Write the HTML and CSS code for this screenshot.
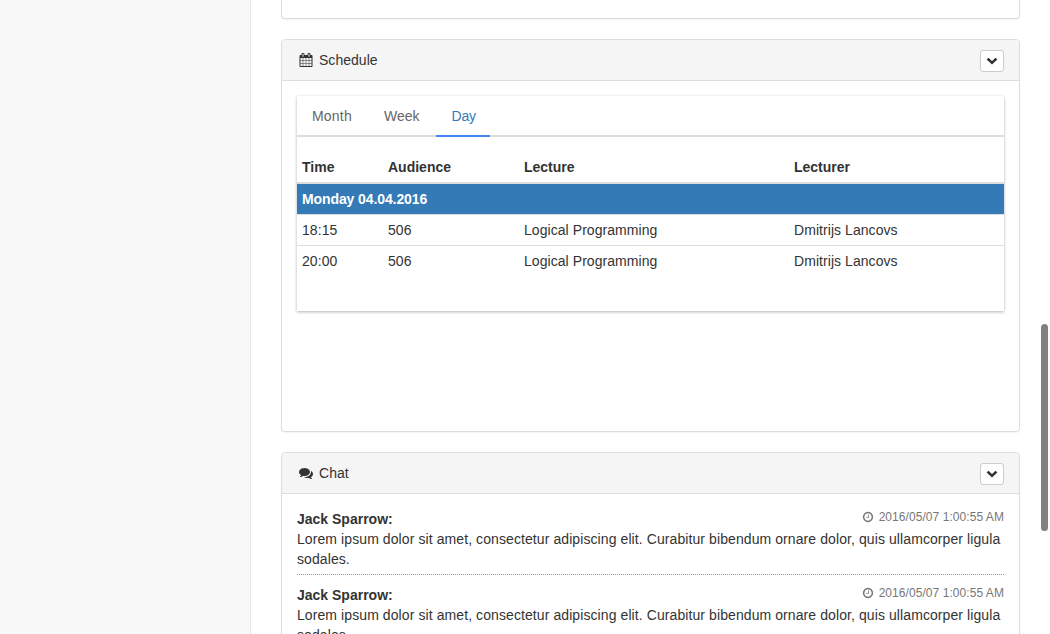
FILE: index.html
```html
<!DOCTYPE html>
<html lang="en">
<head>
<meta charset="utf-8">
<title>Dashboard</title>
<link rel="stylesheet" href="styles.css">
</head>
<body>
<svg width="0" height="0" class="sprite">
  <symbol id="calendar" viewBox="0 0 1792 1792"><path d="M192 1664h288v-288h-288v288zm352 0h320v-288h-320v288zm-352-352h288v-320h-288v320zm352 0h320v-320h-320v320zm-352-384h288v-288h-288v288zm736 736h320v-288h-320v288zm-384-736h320v-288h-320v288zm768 736h288v-288h-288v288zm-384-352h320v-320h-320v320zm-352-864v-288q0-13-9.500-22.500t-22.500-9.500h-64q-13 0-22.500 9.500t-9.500 22.500v288q0 13 9.500 22.500t22.500 9.500h64q13 0 22.500-9.500t9.500-22.500zm736 864h288v-320h-288v320zm-384-384h320v-288h-320v288zm384 0h288v-288h-288v288zm32-480v-288q0-13-9.500-22.500t-22.500-9.500h-64q-13 0-22.500 9.500t-9.500 22.500v288q0 13 9.500 22.500t22.500 9.500h64q13 0 22.500-9.500t9.500-22.500zm384-64v1280q0 52-38 90t-90 38h-1408q-52 0-90-38t-38-90v-1280q0-52 38-90t90-38h128v-96q0-66 47-113t113-47h64q66 0 113 47t47 113v96h384v-96q0-66 47-113t113-47h64q66 0 113 47t47 113v96h128q52 0 90 38t38 90z"/></symbol>
  <symbol id="comments" viewBox="0 0 1792 1792"><path d="M1408 768q0 139-94 257t-256.500 186.500-353.500 68.500q-86 0-176-16-124 88-278 128-36 9-86 16h-3q-11 0-20.500-8t-11.500-21q-1-3-1-6.500t.5-6.500 2-6l2.500-5 3.500-5.500 4-5 4.500-5 4-4.500q5-6 23-25t26-29.500 22.500-29 25-38.500 20.500-44q-124-72-195-177t-71-224q0-139 94-257t256.500-186.500 353.500-68.500 353.500 68.500 256.500 186.500 94 257zm384 256q0 120-71 224.500t-195 176.500q10 24 20.500 44t25 38.500 22.500 29 26 29.500 23 25q1 1 4 4.500t4.500 5 4 5 3.500 5.500l2.500 5 2 6 .5 6.500-1 6.500q-3 14-13 22t-22 7q-50-7-86-16-154-40-278-128-90 16-176 16-271 0-472-132 58 4 88 4 161 0 309-45t264-129q125-92 192-212t67-254q0-77-23-152 129 71 204 178t75 230z"/></symbol>
  <symbol id="clock" viewBox="0 0 1792 1792"><path d="M1024 544v448q0 14-9 23t-23 9h-320q-14 0-23-9t-9-23v-64q0-14 9-23t23-9h224v-352q0-14 9-23t23-9h64q14 0 23 9t9 23zm416 352q0-148-73-273t-198-198-273-73-273 73-198 198-73 273 73 273 198 198 273 73 273-73 198-198 73-273zm224 0q0 209-103 385.500t-279.500 279.500-385.500 103-385.500-103-279.500-279.500-103-385.500 103-385.500 279.500-279.500 385.500-103 385.500 103 279.500 279.500 103 385.500z"/></symbol>
  <symbol id="chevron" viewBox="0 0 12 8"><path d="M.6 2.500 2.500.7 6 4 9.500.7l1.900 1.800L6 7.500z"/></symbol>
</svg>
<div class="page">
  <aside class="sidebar"></aside>
  <main class="content">
    <section class="panel panel-previous"></section>

    <section class="panel panel-schedule">
      <header class="panel-heading">
        <svg class="heading-icon"><use href="#calendar"/></svg>
        <span class="panel-title">Schedule</span>
        <button class="toggle" aria-label="Options"><svg><use href="#chevron"/></svg></button>
      </header>
      <div class="panel-body">
        <div class="card">
          <nav class="tabs">
            <a class="tab">Month</a>
            <a class="tab">Week</a>
            <a class="tab active">Day</a>
          </nav>
          <table class="schedule">
            <colgroup><col class="col-time"><col class="col-audience"><col class="col-lecture"><col></colgroup>
            <thead><tr><th>Time</th><th>Audience</th><th>Lecture</th><th>Lecturer</th></tr></thead>
            <tbody>
              <tr class="date-row"><th colspan="4">Monday 04.04.2016</th></tr>
              <tr><td>18:15</td><td>506</td><td>Logical Programming</td><td>Dmitrijs Lancovs</td></tr>
              <tr><td>20:00</td><td>506</td><td>Logical Programming</td><td>Dmitrijs Lancovs</td></tr>
            </tbody>
          </table>
        </div>
      </div>
    </section>

    <section class="panel">
      <header class="panel-heading">
        <svg class="heading-icon"><use href="#comments"/></svg>
        <span class="panel-title">Chat</span>
        <button class="toggle" aria-label="Options"><svg><use href="#chevron"/></svg></button>
      </header>
      <div class="panel-body">
        <article class="message">
          <div class="message-head"><strong>Jack Sparrow:</strong><time><svg><use href="#clock"/></svg>2016/05/07 1:00:55 AM</time></div>
          <p>Lorem ipsum dolor sit amet, consectetur adipiscing elit. Curabitur bibendum ornare dolor, quis ullamcorper ligula sodales.</p>
        </article>
        <article class="message">
          <div class="message-head"><strong>Jack Sparrow:</strong><time><svg><use href="#clock"/></svg>2016/05/07 1:00:55 AM</time></div>
          <p>Lorem ipsum dolor sit amet, consectetur adipiscing elit. Curabitur bibendum ornare dolor, quis ullamcorper ligula sodales.</p>
        </article>
      </div>
    </section>
  </main>
  <div class="scroll-thumb"></div>
</div>
</body>
</html>
```
FILE: styles.css
```css
* { box-sizing: border-box; }
body {
  margin: 0;
  overflow: hidden;
  background: #fff;
  color: #333;
  font: 14px/20px "Helvetica Neue", "Liberation Sans", Arial, sans-serif;
}
.sprite { position: absolute; }
svg { fill: currentColor; flex: none; }
.page { position: relative; display: flex; height: 634px; overflow: hidden; }
.sidebar { flex: none; width: 251px; background: #f8f8f8; border-right: 1px solid #e7e7e7; }
.content { flex: 1; padding: 0 30px; }
.panel {
  margin-bottom: 20px;
  border: 1px solid #ddd;
  border-radius: 4px;
  background: #fff;
  box-shadow: 0 1px 1px rgba(0, 0, 0, .05);
}
.panel-previous { height: 19px; border-top: 0; border-radius: 0 0 4px 4px; }
.panel-schedule { height: 393px; }
.panel-heading {
  display: flex;
  align-items: flex-start;
  height: 41px;
  padding: 10px 15px;
  background: #f5f5f5;
  border-bottom: 1px solid #ddd;
  border-radius: 3px 3px 0 0;
}
.heading-icon { width: 14px; height: 14px; margin: 3px 6px 0 2px; }
.panel-title { flex: 1; letter-spacing: .03px; }
.toggle {
  display: flex;
  align-items: center;
  justify-content: center;
  width: 24px;
  height: 22px;
  padding: 0;
  background: #fff;
  border: 1px solid #ccc;
  border-radius: 3px;
  color: #333;
}
.toggle svg { width: 12px; height: 8px; }
.panel-body { padding: 15px; }
.card { height: 215px; background: #fff; box-shadow: 0 1px 3px rgba(0, 0, 0, .3); }
.tabs { display: flex; gap: 2px; height: 41px; margin-bottom: 15px; border-bottom: 2px solid #ddd; }
.tab { height: 41px; padding: 10px 15px; color: #666; letter-spacing: .2px; }
.tab + .tab { letter-spacing: 0; }
.tab.active { width: 54px; color: #337ab7; border-bottom: 2px solid #4285f4; }
.tabs .tab.active { letter-spacing: -.2px; }
.schedule { width: 100%; table-layout: fixed; border-collapse: separate; border-spacing: 0; }
.col-time { width: 86px; }
.col-audience { width: 136px; }
.col-lecture { width: 270px; }
.schedule th, .schedule td { padding: 5px; text-align: left; }
.schedule thead th { border-bottom: 2px solid #ddd; }
.schedule td { border-top: 1px solid #ddd; letter-spacing: .06px; }
.schedule .date-row th { background: #337ab7; color: #fff; letter-spacing: -.1px; }
.message { margin-bottom: 10px; padding-bottom: 5px; border-bottom: 1px dotted #999; }
.message p { margin: 0; letter-spacing: .088px; }
.message-head { display: flex; justify-content: space-between; height: 20px; }
.message time {
  display: flex;
  align-items: center;
  height: 16px;
  font-size: 12px;
  letter-spacing: .06px;
  color: #777;
}
.message time svg { width: 12px; height: 12px; margin-right: 5px; }
.scroll-thumb {
  position: absolute;
  top: 324px;
  left: 1041px;
  width: 7px;
  height: 207px;
  border-radius: 4px;
  background: #808080;
}
```
